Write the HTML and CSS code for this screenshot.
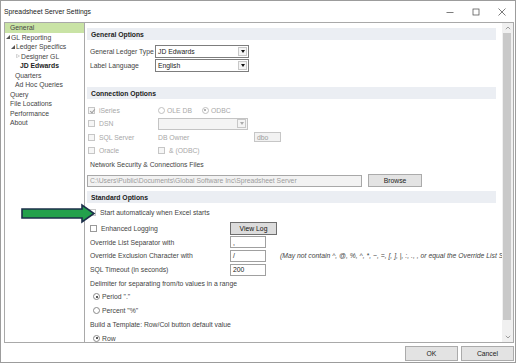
FILE: index.html
```html
<!DOCTYPE html>
<html lang="en">
<head>
  <meta charset="UTF-8">
  <meta name="viewport" content="width=device-width, initial-scale=1.0">
  <title>Spreadsheet Server Settings</title>
  <link rel="stylesheet" href="styles.css">
</head>
<body>
  <div class="window">
    <div class="titlebar">
      <span class="title">Spreadsheet Server Settings</span>
      <div class="win-controls">
        <span class="win-ctl"><svg width="8" height="8" viewBox="0 0 8 8"><path d="M0.5 4.5h7" stroke="#444" stroke-width="0.7"/></svg></span>
        <span class="win-ctl"><svg width="8" height="8" viewBox="0 0 8 8"><rect x="1" y="1" width="6" height="6" fill="none" stroke="#444" stroke-width="0.7"/></svg></span>
        <span class="win-ctl"><svg width="8" height="8" viewBox="0 0 8 8"><path d="M0.5 0.5l7 7M7.5 0.5l-7 7" stroke="#444" stroke-width="0.7"/></svg></span>
      </div>
    </div>

    <div class="panes">
      <!-- settings tree -->
      <ul class="tree">
        <li class="selected lvl0">General</li>
        <li class="lvl0t"><svg class="twisty" viewBox="0 0 4 4"><polygon points="4,0 4,4 0,4" fill="#555"/></svg>GL Reporting</li>
        <li class="lvl1t"><svg class="twisty" viewBox="0 0 4 4"><polygon points="4,0 4,4 0,4" fill="#555"/></svg>Ledger Specifics</li>
        <li class="lvl2t"><svg class="twisty" viewBox="0 0 4 4"><polygon points="0.5,0.3 3.5,2 0.5,3.7" fill="none" stroke="#aaa" stroke-width="0.5"/></svg>Designer GL</li>
        <li class="lvl2 bold">JD Edwards</li>
        <li class="lvl1">Quarters</li>
        <li class="lvl1">Ad Hoc Queries</li>
        <li class="lvl0">Query</li>
        <li class="lvl0">File Locations</li>
        <li class="lvl0">Performance</li>
        <li class="lvl0">About</li>
      </ul>

      <div class="main">
        <div class="content">
          <div class="band first">General Options</div>
          <div class="row gen">
            <span class="lbl">General Ledger Type</span>
            <div class="combo"><span>JD Edwards</span><span class="drop"></span></div>
          </div>
          <div class="row gen">
            <span class="lbl">Label Language</span>
            <div class="combo"><span>English</span><span class="drop"></span></div>
          </div>

          <div class="band second">Connection Options</div>
          <div class="conn">
            <div class="crow">
              <span class="c1 off"><span class="cb checked"></span>iSeries</span>
              <span class="c2 off"><span class="rb"></span>OLE DB<span class="rb on gap"></span>ODBC</span>
            </div>
            <div class="crow">
              <span class="c1 off"><span class="cb"></span>DSN</span>
              <span class="c2"><div class="combo dis"><span></span><span class="drop"></span></div></span>
            </div>
            <div class="crow">
              <span class="c1 off"><span class="cb"></span>SQL Server</span>
              <span class="c2 off">DB Owner</span>
              <span class="field dis small">dbo</span>
            </div>
            <div class="crow">
              <span class="c1 off"><span class="cb"></span>Oracle</span>
              <span class="c2 off"><span class="cb"></span>&amp; (ODBC)</span>
            </div>
            <div class="crow">
              <span class="plain">Network Security &amp; Connections Files</span>
            </div>
          </div>
          <div class="path-row">
            <span class="field dis path">C:\Users\Public\Documents\Global Software Inc\Spreadsheet Server</span>
            <button class="btn browse">Browse</button>
          </div>

          <div class="band third">Standard Options</div>
          <div class="row first-std"><span class="cb"></span>Start automaticaly when Excel starts</div>
          <div class="row log">
            <span class="lbl cbl"><span class="cb"></span>Enhanced Logging</span>
            <button class="btn viewlog">View Log</button>
          </div>
          <div class="row">
            <span class="lbl">Override List Separator with</span>
            <span class="field">,</span>
          </div>
          <div class="row">
            <span class="lbl">Override Exclusion Character with</span>
            <span class="field">/</span>
            <span class="note">(May not contain ^, @, %, ^, *, ~, =, [, ], |, :, ., , or equal the Override List Separator)</span>
          </div>
          <div class="row">
            <span class="lbl">SQL Timeout (in seconds)</span>
            <span class="field">200</span>
          </div>
          <div class="row"><span class="plain">Delimiter for separating from/to values in a range</span></div>
          <div class="row opt"><span class="rb on"></span>Period "."</div>
          <div class="row opt"><span class="rb"></span>Percent "%"</div>
          <div class="row"><span class="plain">Build a Template: Row/Col button default value</span></div>
          <div class="row opt"><span class="rb on"></span>Row</div>
          <div class="row opt"><span class="rb"></span>Col</div>
        </div>

        <div class="scrollbar">
          <span class="sb-arrow"><svg width="6" height="4" viewBox="0 0 6 4"><path d="M0.8 3.2L3 1l2.2 2.2" fill="none" stroke="#777" stroke-width="0.7"/></svg></span>
          <div class="sb-track"><div class="sb-thumb"></div></div>
          <span class="sb-arrow"><svg width="6" height="4" viewBox="0 0 6 4"><path d="M0.8 0.8L3 3l2.2-2.2" fill="none" stroke="#777" stroke-width="0.7"/></svg></span>
        </div>
      </div>
    </div>

    <div class="footer">
      <button class="btn dlg">OK</button>
      <button class="btn dlg">Cancel</button>
    </div>

    <!-- green callout pointing at the start-up option -->
    <svg class="callout" width="80" height="24" viewBox="0 0 80 24">
      <polygon points="3,6 63,6 63,2 75,10.5 63,19 63,15 3,15" fill="#23a14c" stroke="#1c2f4a" stroke-width="1.6"/>
    </svg>
  </div>
</body>
</html>
```

FILE: styles.css
```css
* {
  box-sizing: border-box;
}
body {
  margin: 0;
  background: #fff;
  font-family: "Liberation Sans", Arial, sans-serif;
  font-size: 6.8px;
  color: #444;
}
.window {
  position: relative;
  width: 516px;
  height: 363px;
  border: 1px solid #9c9c9c;
  background: #fff;
  display: flex;
  flex-direction: column;
  overflow: hidden;
}

/* title bar */
.titlebar {
  flex: none;
  height: 21px;
  display: flex;
  align-items: center;
  justify-content: space-between;
  padding-left: 3px;
}
.title {
  font-size: 6.8px;
  color: #222;
}
.win-controls {
  display: flex;
}
.win-ctl {
  width: 26px;
  height: 21px;
  display: flex;
  align-items: center;
  justify-content: center;
}

/* panes */
.panes {
  flex: none;
  height: 321px;
  display: flex;
  padding: 0 1px 0 3px;
}
.tree {
  width: 80px;
  margin: 0;
  padding: 0;
  list-style: none;
  border: 1px solid #a9a9a9;
  border-right: none;
}
.tree li {
  height: 9.5px;
  display: flex;
  align-items: center;
  white-space: nowrap;
}
.tree li.selected {
  background: #c9e3a5;
}
.tree .lvl0 { padding-left: 5px; }
.tree .lvl0t { padding-left: 1px; }
.tree .lvl1 { padding-left: 10px; }
.tree .lvl1t { padding-left: 6px; }
.tree .lvl2 { padding-left: 15px; }
.tree .lvl2t { padding-left: 11px; }
.tree .bold {
  font-weight: bold;
  color: #222;
}
.twisty {
  width: 4px;
  height: 4px;
  margin-right: 1px;
  flex: none;
}

.main {
  flex: 1;
  min-width: 0;
  display: flex;
  border: 1px solid #a9a9a9;
}
.content {
  flex: 1;
  min-width: 0;
  overflow: hidden;
  padding-left: 3px;
}

/* section header */
.band {
  height: 12px;
  margin: 0 6px 0 -1px;
  padding-left: 4px;
  display: flex;
  align-items: center;
  background: #ebeef3;
  font-weight: bold;
  color: #222;
}
.band.first { margin-top: 5px; }
.band.second { margin-top: 15px; }
.band.third { margin-top: 4px; }

.row {
  height: 13.7px;
  display: flex;
  align-items: center;
  white-space: nowrap;
}
.row.gen {
  height: 14px;
}
.band.first + .row {
  margin-top: 4px;
}
.lbl {
  flex: none;
  width: 142px;
  padding-left: 2px;
}
.row.gen .lbl {
  width: 67px;
}
.lbl.cbl {
  padding-left: 2px;
  display: flex;
  align-items: center;
}
.plain {
  padding-left: 2px;
}

/* combo box */
.combo {
  width: 94px;
  height: 13px;
  border: 1px solid #7d7d7d;
  display: flex;
  align-items: center;
  justify-content: space-between;
  padding-left: 2px;
  color: #222;
}
.drop {
  width: 9px;
  height: 9px;
  margin-right: 1px;
  border: 1px solid #c8c8c8;
  background: #f4f4f4;
  position: relative;
}
.drop::after {
  content: "";
  position: absolute;
  left: 1.5px;
  top: 2px;
  border-left: 2.5px solid transparent;
  border-right: 2.5px solid transparent;
  border-top: 3px solid #111;
}
.combo.dis {
  width: 90px;
  height: 12px;
  border-color: #c4c4c4;
  background: #f4f4f4;
}
.combo.dis .drop::after {
  border-top-color: #aaa;
}

/* connection grid */
.conn {
  margin-top: 4.5px;
}
.crow {
  height: 13.5px;
  display: flex;
  align-items: center;
  white-space: nowrap;
}
.c1 {
  width: 70px;
  display: flex;
  align-items: center;
}
.c2 {
  width: 96px;
  display: flex;
  align-items: center;
}
.off {
  color: #a8a8a8;
}

/* check boxes and radios */
.cb {
  flex: none;
  width: 7px;
  height: 7px;
  margin-right: 4px;
  border: 1px solid #9a9a9a;
  background: #fff;
  position: relative;
}
.off .cb {
  border-color: #c6c6c6;
  background: #f6f6f6;
}
.cb.checked::after {
  content: "";
  position: absolute;
  left: 1.5px;
  top: 0;
  width: 2px;
  height: 4px;
  border: solid #a0a0a0;
  border-width: 0 1px 1px 0;
  transform: rotate(40deg);
}
.rb {
  flex: none;
  width: 7px;
  height: 7px;
  margin-right: 2px;
  border: 1px solid #8a8a8a;
  border-radius: 50%;
  background: #fff;
  position: relative;
}
.off .rb {
  border-color: #c0c0c0;
}
.rb.on::after {
  content: "";
  position: absolute;
  left: 1.5px;
  top: 1.5px;
  width: 2px;
  height: 2px;
  border-radius: 50%;
  background: #222;
}
.off .rb.on::after {
  background: #9a9a9a;
}
.rb.gap {
  margin-left: 10px;
}
.row.opt {
  padding-left: 5px;
}

/* text fields */
.field {
  flex: none;
  width: 36px;
  height: 12px;
  border: 1px solid #a0a0a0;
  padding-left: 2px;
  display: flex;
  align-items: center;
  color: #222;
}
.field.dis {
  background: #f2f2f2;
  border-color: #c6c6c6;
  color: #9c9c9c;
}
.field.small {
  width: 27px;
  height: 10px;
}
.path-row {
  margin-top: 3px;
  height: 13px;
  display: flex;
  align-items: center;
}
.field.path {
  width: 275px;
  margin-left: -1px;
  border-color: #a8a8a8;
}
.note {
  margin-left: 14px;
  font-style: italic;
  color: #444;
}

/* buttons */
.btn {
  font-family: inherit;
  font-size: 6.8px;
  color: #222;
  background: #e3e3e3;
  border: 1px solid #ababab;
  padding: 0;
  margin: 0;
}
.browse {
  width: 54px;
  height: 13px;
  margin-left: 6px;
}
.viewlog {
  width: 47px;
  height: 13px;
  background: #dcdcdc;
  border-color: #6f6f6f;
  color: #111;
}
.row.first-std {
  margin-top: 3px;
  padding-left: 1px;
}
.row.first-std .cb {
  border-color: #c8c8c8;
}
.row.log {
  margin-top: 2px;
}

/* scrollbar */
.scrollbar {
  flex: none;
  width: 11px;
  display: flex;
  flex-direction: column;
  background: #f0f0f0;
}
.sb-arrow {
  height: 10px;
  display: flex;
  align-items: center;
  justify-content: center;
}
.sb-track {
  flex: 1;
  padding: 0 2px 0 1px;
}
.sb-thumb {
  height: 96%;
  background: #c9c9c9;
}

/* footer */
.footer {
  flex: none;
  height: 19px;
  display: flex;
  justify-content: flex-end;
  gap: 3px;
  padding: 3px 1px 0 0;
}
.btn.dlg {
  width: 53px;
  height: 15px;
}

.callout {
  position: absolute;
  left: 18px;
  top: 202px;
}
```
